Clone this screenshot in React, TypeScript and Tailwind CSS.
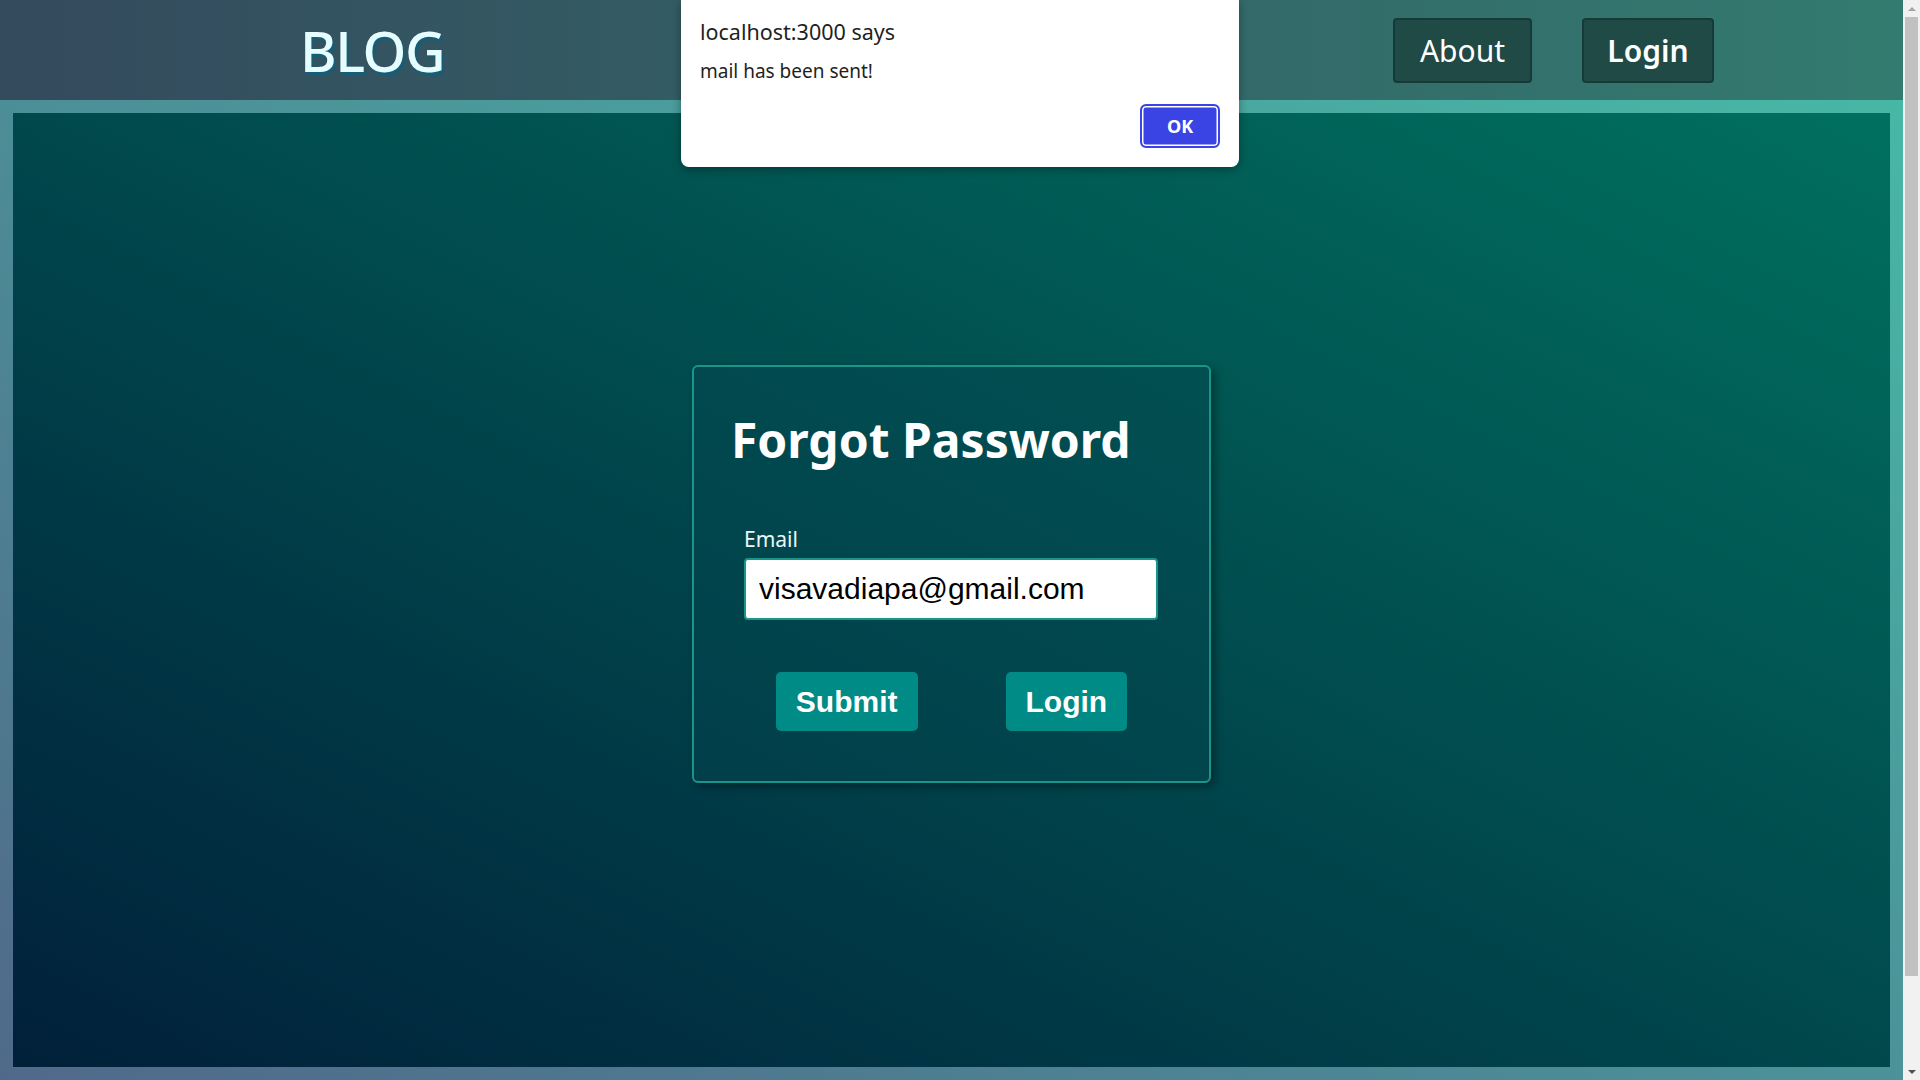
import { useState } from 'react';

const uiFont = "font-['Noto_Sans','Open_Sans',sans-serif]";
const formFont = "font-['Liberation_Sans',Arial,sans-serif]";

function Header() {
  return (
    <header
      className={`flex h-[100px] shrink-0 items-center justify-between bg-[linear-gradient(to_right,#344a5d,#337b70)] pl-[300px] pr-[189px] ${uiFont}`}
    >
      <h1 className="text-[56px] font-medium leading-none tracking-tight text-[#e6fdff] [text-shadow:2px_3px_1px_#145e78]">
        BLOG
      </h1>
      <nav className="flex items-center gap-[50px]">
        <a className="flex h-[65px] w-[139px] items-center justify-center rounded-[4px] border-2 border-[#163a37] bg-[#1f4a46] text-[30px] text-white">
          About
        </a>
        <a className="flex h-[65px] w-[132px] items-center justify-center rounded-[4px] border-2 border-[#163a37] bg-[#1f4a46] text-[30px] font-semibold text-white">
          Login
        </a>
      </nav>
    </header>
  );
}

// native alert() box, sits over the page
function AlertBox() {
  return (
    <div
      className={`absolute left-[681px] top-0 z-10 h-[167px] w-[558px] rounded-b-[8px] bg-white pl-[19px] pr-[19px] pt-[17px] shadow-[0_2px_10px_rgba(0,0,0,0.35)] ${uiFont}`}
    >
      <p className="text-[21.5px] leading-[30px] text-[#1f1f1f]">localhost:3000 says</p>
      <p className="mt-[11px] text-[19px] leading-[26px] text-[#1f1f1f]">mail has been sent!</p>
      <div className="mt-[20px] flex justify-end">
        <button className="flex h-[44px] w-[80px] items-center justify-center rounded-[6px] border-2 border-[#3a44e4] bg-[#3a44e4] text-[18px] font-bold text-white shadow-[inset_0_0_0_1.5px_#ffffff]">
          OK
        </button>
      </div>
    </div>
  );
}

function ForgotCard() {
  const [email, setEmail] = useState('visavadiapa@gmail.com');
  return (
    <form
      onSubmit={(e) => e.preventDefault()}
      className="flex h-[418px] w-[519px] flex-col rounded-[6px] border-2 border-[#1a9588] bg-[#02454f]/40 shadow-[4px_4px_8px_rgba(0,0,0,0.35)]"
    >
      <h2 className={`mt-[38px] pl-[37px] text-[48px] font-bold leading-[70px] text-white ${uiFont}`}>
        Forgot Password
      </h2>
      <div className="mt-[50px] flex flex-col px-[50px]">
        <label className={`text-[21px] leading-[28px] text-[#eef6f6] ${uiFont}`}>Email</label>
        <input
          value={email}
          onChange={(e) => setEmail(e.target.value)}
          className={`mt-[5px] h-[62px] w-[414px] rounded-[4px] border-2 border-[#1a9588] bg-white px-[13px] text-[30px] text-black outline-none ${formFont}`}
        />
      </div>
      <div className="mt-[52px] flex justify-center gap-[88px]">
        <button
          type="submit"
          className={`h-[59px] rounded-[5px] bg-[#008b87] px-[20px] text-[30px] font-bold text-white ${formFont}`}
        >
          Submit
        </button>
        <button
          type="button"
          className={`h-[59px] rounded-[5px] bg-[#008b87] px-[20px] text-[30px] font-bold text-white ${formFont}`}
        >
          Login
        </button>
      </div>
    </form>
  );
}

function Scrollbar() {
  return (
    <div className="flex h-[1080px] w-[17px] shrink-0 flex-col bg-[#f1f1f1]">
      <div className="flex h-[17px] items-center justify-center">
        <div className="h-0 w-0 border-x-[4px] border-b-[4px] border-x-transparent border-b-[#a3a3a3]" />
      </div>
      <div className="mx-[2px] h-[959px] bg-[#c1c1c1]" />
      <div className="flex-1" />
      <div className="flex h-[17px] items-center justify-center">
        <div className="h-0 w-0 border-x-[4px] border-t-[4px] border-x-transparent border-t-[#505050]" />
      </div>
    </div>
  );
}

export default function App() {
  return (
    <div className="relative flex h-[1080px] overflow-hidden">
      <div className="flex flex-1 flex-col bg-[linear-gradient(to_top_right,#50698a,#47bba7)]">
        <Header />
        <AlertBox />
        <div className="flex-1 p-[13px]">
          <main className="flex h-full items-start justify-center bg-[linear-gradient(to_top_right,#01203a,#00705f)] pt-[252px]">
            <ForgotCard />
          </main>
        </div>
      </div>
      <Scrollbar />
    </div>
  );
}
